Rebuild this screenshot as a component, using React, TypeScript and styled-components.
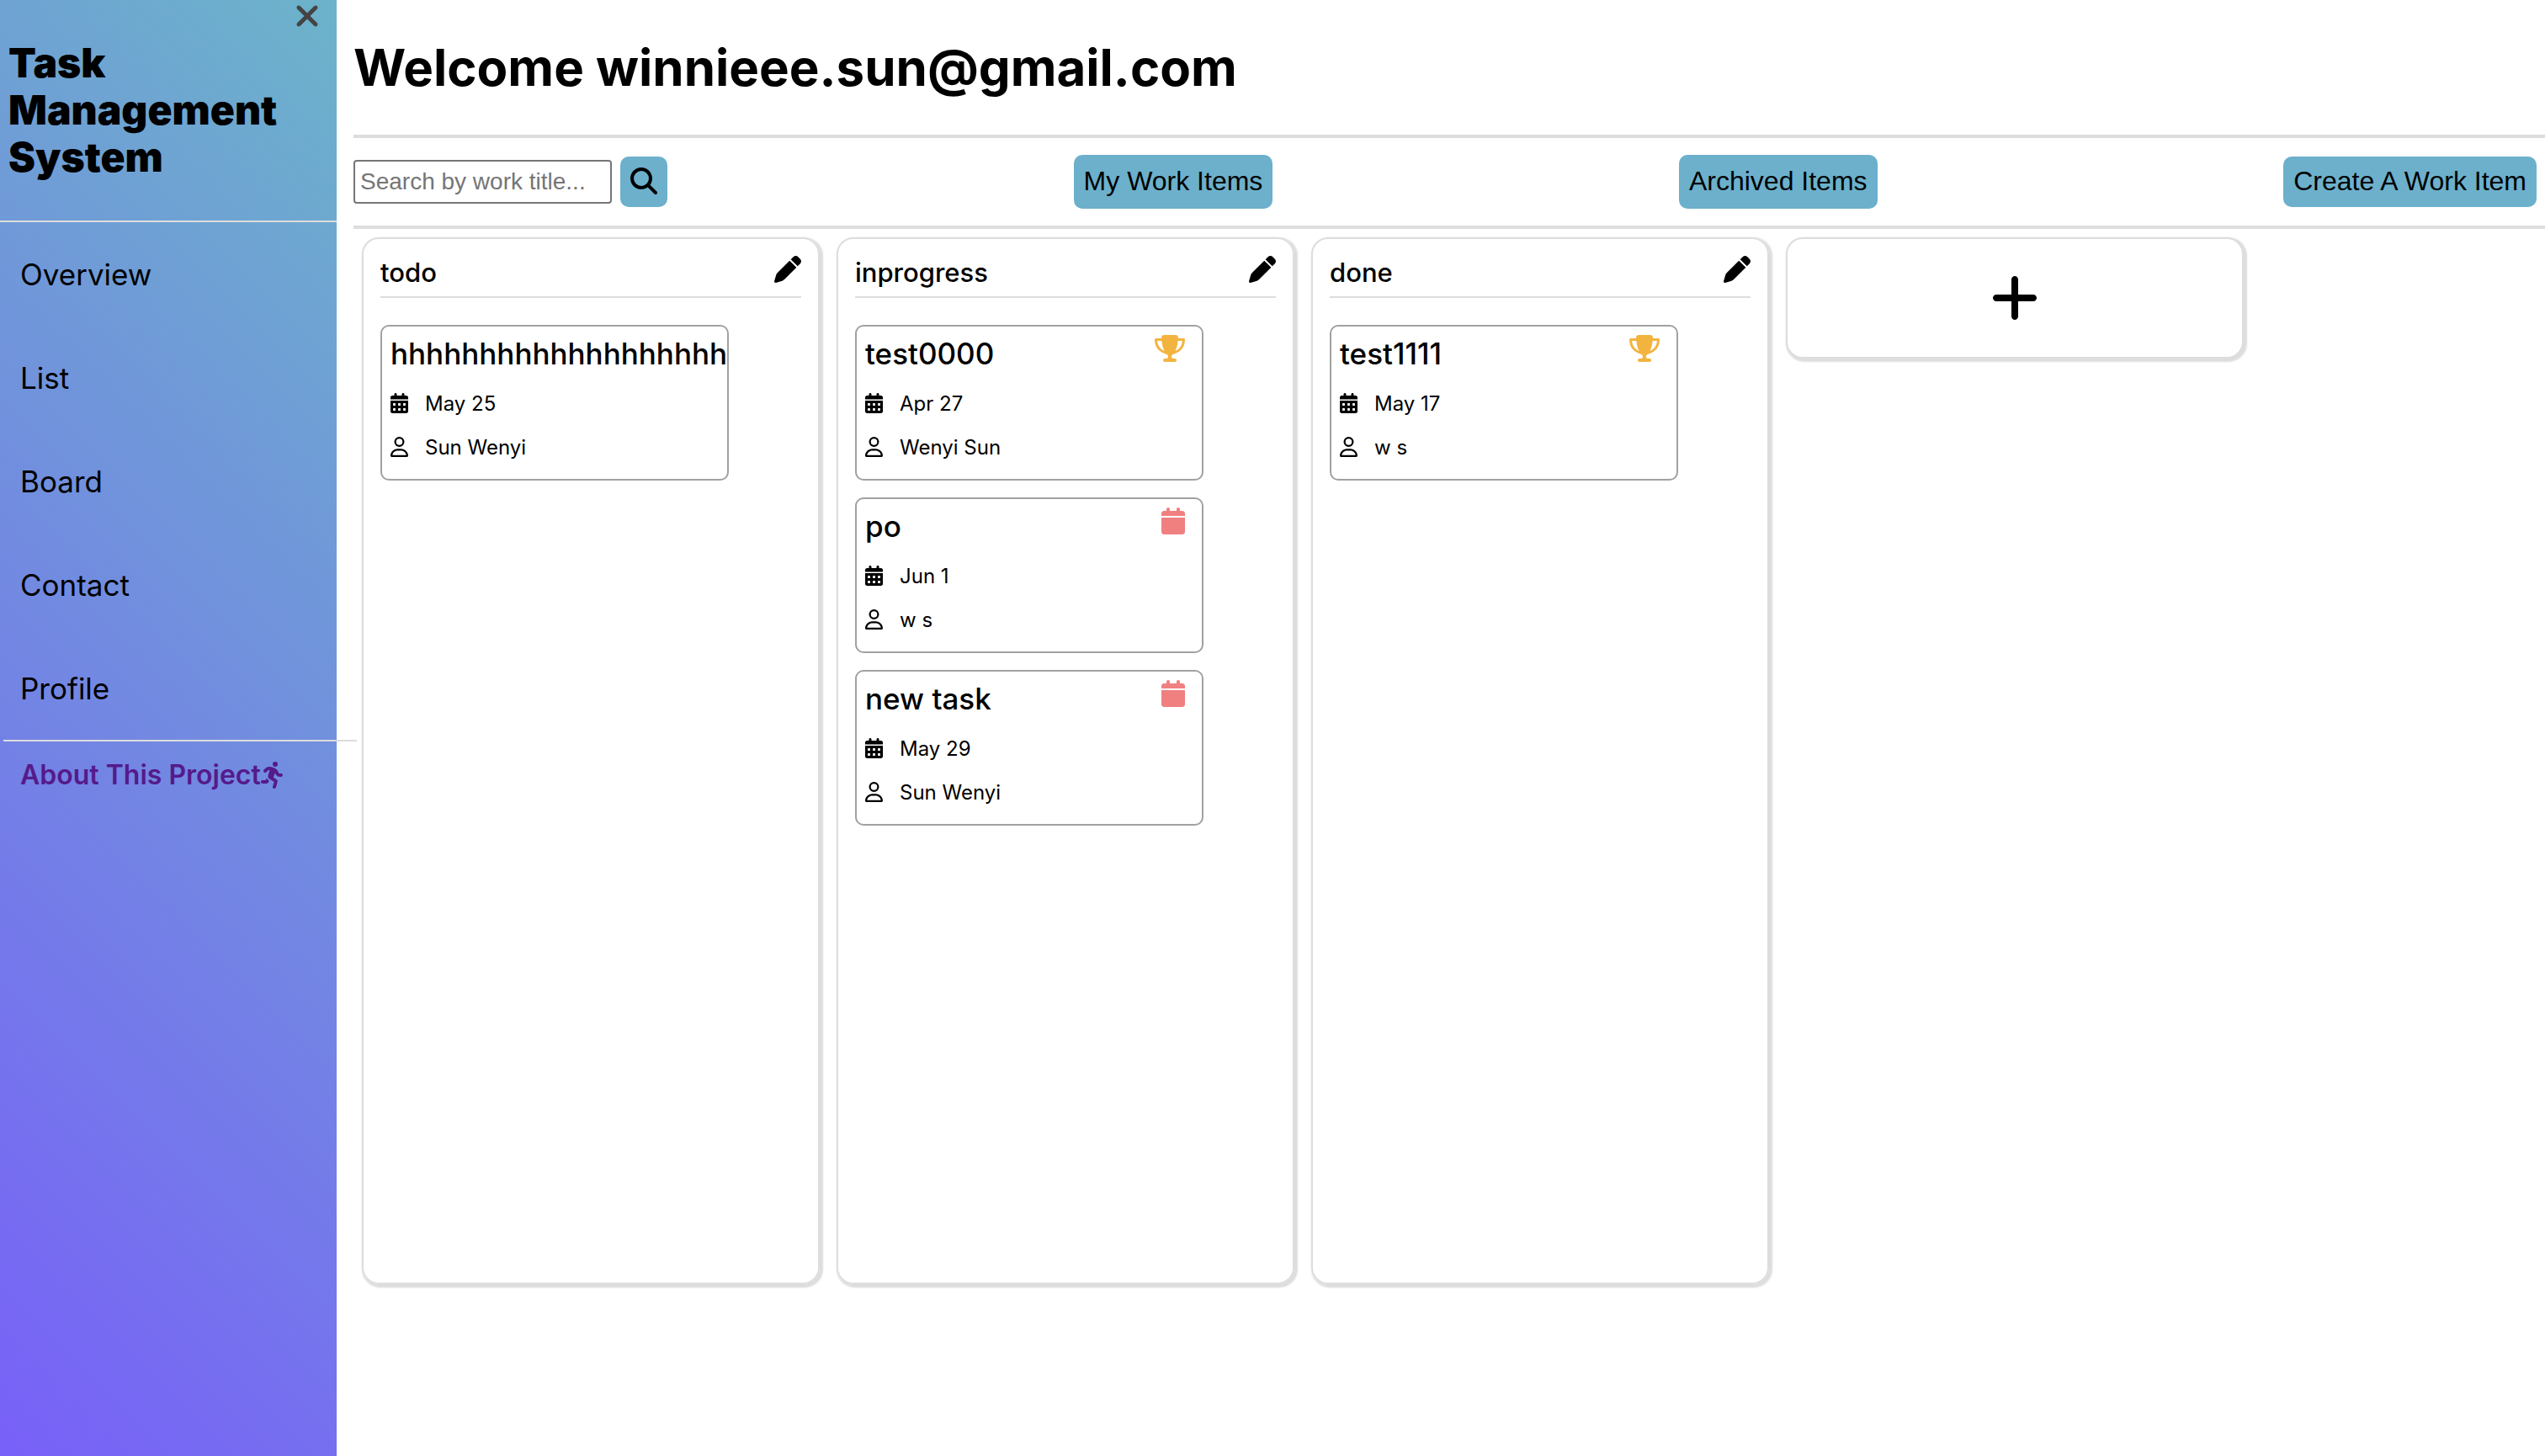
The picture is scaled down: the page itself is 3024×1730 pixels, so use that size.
import React from "react";
import styled, { createGlobalStyle } from "styled-components";
import {
  FaCalendar,
  FaCalendarDays,
  FaMagnifyingGlass,
  FaPen,
  FaPersonRunning,
  FaPlus,
  FaRegUser,
  FaTrophy,
  FaXmark,
} from "react-icons/fa6";

const colors = {
  accent: "#6cb0cc",
  line: "#dddddd",
  cardBorder: "#a1a1a1",
  gold: "#f3b43f",
  coral: "#f08080",
  visited: "#551a8b",
};

const GlobalStyle = createGlobalStyle`
  * {
    box-sizing: border-box;
  }

  body {
    margin: 0;
    background: #ffffff;
    color: #000000;
    font-family: Inter, "Liberation Sans", sans-serif;
  }
`;

const Layout = styled.div`
  display: flex;
  min-height: 100vh;
`;

const Sidebar = styled.aside`
  z-index: 1;
  flex: none;
  display: flex;
  flex-direction: column;
  width: 400px;
  background: linear-gradient(45deg, #7860f8, #6cb3ca);
`;

const CloseButton = styled.button`
  align-self: flex-end;
  display: flex;
  align-items: center;
  height: 38px;
  margin-right: 20px;
  padding: 0;
  border: 0;
  background: none;
  color: #444444;
  cursor: pointer;
`;

const Icon = styled.span<{ $width: number; $height: number }>`
  flex: none;
  display: flex;

  svg {
    width: ${({ $width }) => $width}px;
    height: ${({ $height }) => $height}px;
  }
`;

const Brand = styled.h1`
  margin: 0;
  padding: 9px 10px 47px;
  border-bottom: 2px solid ${colors.line};
  font-size: 48px;
  font-weight: 900;
  line-height: 56px;
`;

const Nav = styled.nav`
  display: flex;
  flex-direction: column;
`;

const NavLink = styled.a`
  padding: 2px 24px 0;
  color: #000000;
  font-size: 35px;
  line-height: 121px;
  text-decoration: none;
`;

const Divider = styled.hr`
  flex: none;
  width: 420px;
  height: 2px;
  margin: 0 4px;
  border: 0;
  background: ${colors.line};
`;

const AboutLink = styled.a`
  display: flex;
  align-items: center;
  padding: 20px 24px;
  color: ${colors.visited};
  font-size: 32px;
  font-weight: 600;
  line-height: 40px;
  text-decoration: none;
`;

const Main = styled.main`
  flex: 1;
  min-width: 0;
  padding-left: 20px;
`;

const Welcome = styled.h2`
  margin: 0;
  padding: 40px 0;
  font-size: 60px;
  font-weight: 700;
  line-height: 80px;
`;

const Toolbar = styled.div`
  display: flex;
  align-items: center;
  justify-content: space-between;
  height: 112px;
  padding-right: 10px;
  border: solid ${colors.line};
  border-width: 4px 0;
`;

const SearchForm = styled.form`
  display: flex;
  align-items: center;
  gap: 10px;
`;

const SearchInput = styled.input`
  width: 307px;
  height: 52px;
  padding: 2px 6px;
  border: 2px solid #767676;
  border-radius: 4px;
  background: #ffffff;
  font: 28px "Liberation Sans", Arial, sans-serif;

  &::placeholder {
    color: #757575;
  }
`;

const ActionButton = styled.button<{ $height: number }>`
  display: flex;
  align-items: center;
  height: ${({ $height }) => $height}px;
  padding: 0 12px 2px;
  border: 0;
  border-radius: 10px;
  background: ${colors.accent};
  color: #000000;
  font: 32px "Liberation Sans", Arial, sans-serif;
  cursor: pointer;
`;

const Board = styled.div`
  display: flex;
  align-items: flex-start;
  gap: 20px;
  padding: 10px;
`;

const Column = styled.section`
  flex: none;
  width: 544px;
  height: calc(100vh - 486px);
  padding: 20px;
  border: 2px solid ${colors.line};
  border-radius: 20px;
  box-shadow: 2px 2px 2px 2px ${colors.line};
`;

const ColumnHeader = styled.header`
  display: flex;
  align-items: flex-start;
  justify-content: space-between;
  height: 50px;
  margin-bottom: 32px;
  border-bottom: 2px solid ${colors.line};
`;

const ColumnTitle = styled.h3`
  margin: 0;
  font-size: 31px;
  font-weight: 500;
  line-height: 40px;
`;

const IconButton = styled.button`
  padding: 0;
  border: 0;
  background: none;
  color: #000000;
  cursor: pointer;
`;

const CardList = styled.ul`
  display: flex;
  flex-direction: column;
  gap: 20px;
  margin: 0;
  padding: 0;
  list-style: none;
`;

const Card = styled.li`
  width: 414px;
  padding: 10px 10px 12px;
  overflow: hidden;
  border: 2px solid ${colors.cardBorder};
  border-radius: 10px;
`;

const CardHeader = styled.div`
  display: flex;
  justify-content: space-between;
  height: 44px;
  margin-bottom: 11px;
  padding-right: 10px;
`;

const CardTitle = styled.h4`
  flex: none;
  margin: 0;
  font-size: 35px;
  font-weight: 500;
  line-height: 44px;
  white-space: nowrap;
`;

const Badge = styled(Icon)<{ $color: string }>`
  color: ${({ $color }) => $color};
`;

const CardMeta = styled.div`
  display: flex;
  align-items: center;
  gap: 20px;
  height: 52px;
  font-size: 24px;
`;

const AddColumn = styled.button`
  flex: none;
  display: flex;
  align-items: center;
  justify-content: center;
  width: 544px;
  height: 144px;
  border: 2px solid ${colors.line};
  border-radius: 20px;
  background: #ffffff;
  box-shadow: 2px 2px 2px 2px ${colors.line};
  color: #000000;
  cursor: pointer;
`;

type Mark = "trophy" | "due";

interface WorkItem {
  title: string;
  date: string;
  owner: string;
  mark?: Mark;
}

const columns: { name: string; items: WorkItem[] }[] = [
  {
    name: "todo",
    items: [{ title: "hhhhhhhhhhhhhhhhhhhh", date: "May 25", owner: "Sun Wenyi" }],
  },
  {
    name: "inprogress",
    items: [
      { title: "test0000", date: "Apr 27", owner: "Wenyi Sun", mark: "trophy" },
      { title: "po", date: "Jun 1", owner: "w s", mark: "due" },
      { title: "new task", date: "May 29", owner: "Sun Wenyi", mark: "due" },
    ],
  },
  {
    name: "done",
    items: [{ title: "test1111", date: "May 17", owner: "w s", mark: "trophy" }],
  },
];

const links = ["Overview", "List", "Board", "Contact", "Profile"];

function WorkItemCard({ title, date, owner, mark }: WorkItem) {
  return (
    <Card>
      <CardHeader>
        <CardTitle>{title}</CardTitle>
        {mark === "trophy" && (
          <Badge $width={36} $height={32} $color={colors.gold}>
            <FaTrophy />
          </Badge>
        )}
        {mark === "due" && (
          <Badge $width={28} $height={32} $color={colors.coral}>
            <FaCalendar />
          </Badge>
        )}
      </CardHeader>
      <CardMeta>
        <Icon $width={21} $height={24}>
          <FaCalendarDays />
        </Icon>
        {date}
      </CardMeta>
      <CardMeta>
        <Icon $width={21} $height={24}>
          <FaRegUser />
        </Icon>
        {owner}
      </CardMeta>
    </Card>
  );
}

export default function App() {
  return (
    <>
      <GlobalStyle />
      <Layout>
        <Sidebar>
          <CloseButton type="button" aria-label="Close menu">
            <Icon $width={30} $height={40}>
              <FaXmark />
            </Icon>
          </CloseButton>
          <Brand>Task Management System</Brand>
          <Nav>
            {links.map((link) => (
              <NavLink key={link} href={`#${link.toLowerCase()}`}>
                {link}
              </NavLink>
            ))}
          </Nav>
          <Divider />
          <AboutLink href="#about">
            About This Project
            <Icon $width={28} $height={32}>
              <FaPersonRunning />
            </Icon>
          </AboutLink>
        </Sidebar>
        <Main>
          <Welcome>Welcome winnieee.sun@gmail.com</Welcome>
          <Toolbar>
            <SearchForm role="search" onSubmit={(event) => event.preventDefault()}>
              <SearchInput
                type="text"
                aria-label="Search by work title"
                placeholder="Search by work title..."
              />
              <ActionButton $height={60} type="submit" aria-label="Search">
                <Icon $width={32} $height={32}>
                  <FaMagnifyingGlass />
                </Icon>
              </ActionButton>
            </SearchForm>
            <ActionButton $height={64} type="button">My Work Items</ActionButton>
            <ActionButton $height={64} type="button">Archived Items</ActionButton>
            <ActionButton $height={60} type="button">Create A Work Item</ActionButton>
          </Toolbar>
          <Board>
            {columns.map((column) => (
              <Column key={column.name}>
                <ColumnHeader>
                  <ColumnTitle>{column.name}</ColumnTitle>
                  <IconButton type="button" aria-label={`Edit ${column.name}`}>
                    <Icon $width={32} $height={32}>
                      <FaPen />
                    </Icon>
                  </IconButton>
                </ColumnHeader>
                <CardList>
                  {column.items.map((item) => (
                    <WorkItemCard key={item.title} {...item} />
                  ))}
                </CardList>
              </Column>
            ))}
            <AddColumn type="button" aria-label="Add column">
              <Icon $width={56} $height={64}>
                <FaPlus />
              </Icon>
            </AddColumn>
          </Board>
        </Main>
      </Layout>
    </>
  );
}
